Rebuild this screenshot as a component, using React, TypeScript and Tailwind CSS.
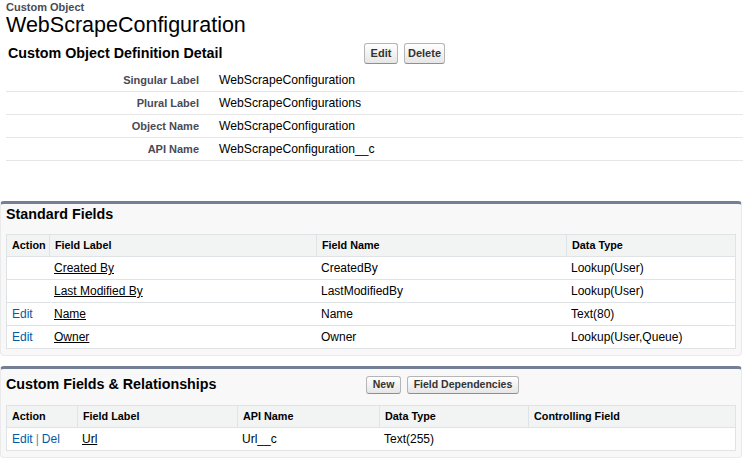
import React from 'react';

interface BtnProps {
  children: React.ReactNode;
  className?: string;
}

function Btn({ children, className = '' }: BtnProps) {
  return (
    <button
      className={`rounded-[3px] border border-[#b5b5b5] border-b-[#8f8f8f] bg-linear-to-b from-white to-[#e6e6e6] font-bold text-[#333] ${className}`}
    >
      {children}
    </button>
  );
}

const details = [
  ['Singular Label', 'WebScrapeConfiguration'],
  ['Plural Label', 'WebScrapeConfigurations'],
  ['Object Name', 'WebScrapeConfiguration'],
  ['API Name', 'WebScrapeConfiguration__c'],
];

const standardFields = [
  { edit: false, label: 'Created By', name: 'CreatedBy', type: 'Lookup(User)' },
  { edit: false, label: 'Last Modified By', name: 'LastModifiedBy', type: 'Lookup(User)' },
  { edit: true, label: 'Name', name: 'Name', type: 'Text(80)' },
  { edit: true, label: 'Owner', name: 'Owner', type: 'Lookup(User,Queue)' },
];

export default function App() {
  return (
    <div className="h-[458px] w-[743px] overflow-hidden bg-white font-['Liberation_Sans',Arial,sans-serif] text-[12px] text-black">
      {/* Page title */}
      <div className="pl-[6px] pt-[1px]">
        <div className="text-[11px] font-bold leading-[12px] text-[#4a4a56]">Custom Object</div>
        <div className="text-[21.5px] leading-[24px]">WebScrapeConfiguration</div>
      </div>

      {/* Detail header */}
      <div className="mt-[5px] flex h-[23px] items-center">
        <h2 className="w-[364px] pl-[8px] text-[14.3px] font-bold">Custom Object Definition Detail</h2>
        <div className="flex gap-[6px]">
          <Btn className="h-[21px] w-[34px] text-[11px]">Edit</Btn>
          <Btn className="h-[21px] w-[41px] text-[11px]">Delete</Btn>
        </div>
      </div>

      {/* Detail rows */}
      <div className="ml-[6px] mt-[4px]">
        {details.map(([label, value]) => (
          <div key={label} className="flex h-[23px] items-center border-b border-[#e6e6e6]">
            <div className="w-[203px] pr-[10px] text-right text-[11px] font-bold text-[#4a4a56]">{label}</div>
            <div className="pl-[10px] text-[12.2px]">{value}</div>
          </div>
        ))}
      </div>

      {/* Standard Fields */}
      <div className="mt-[40px] w-[742px] rounded-[4px] border border-t-[3px] border-[#eaeaea] border-t-[#747e96] bg-[#f8f8f8] px-[5px] pb-[6px]">
        <div className="flex h-[22px] items-center">
          <h3 className="text-[14.3px] font-bold">Standard Fields</h3>
        </div>
        <div className="mt-[8px] border-x border-t border-[#e0e3e5] bg-white">
          <div className="grid h-[22px] grid-cols-[42px_267px_250px_1fr] border-b border-[#e0e3e5] bg-[#f2f3f3] text-[10.8px] font-bold">
            <div className="flex items-center pl-[5px]">Action</div>
            <div className="flex items-center border-l border-[#e0e3e5] pl-[5px]">Field Label</div>
            <div className="flex items-center border-l border-[#e0e3e5] pl-[5px]">Field Name</div>
            <div className="flex items-center border-l border-[#e0e3e5] pl-[5px]">Data Type</div>
          </div>
          {standardFields.map((f) => (
            <div key={f.name} className="grid h-[23px] grid-cols-[42px_267px_250px_1fr] border-b border-[#e0e3e5]">
              <div className="flex items-center pl-[5px] text-[#015ba7]">{f.edit ? 'Edit' : ''}</div>
              <div className="flex items-center pl-[5px]">
                <a href="#" className="underline">{f.label}</a>
              </div>
              <div className="flex items-center pl-[5px]">{f.name}</div>
              <div className="flex items-center pl-[5px]">{f.type}</div>
            </div>
          ))}
        </div>
      </div>

      {/* Custom Fields & Relationships */}
      <div className="mt-[10px] w-[742px] rounded-[4px] border border-t-[3px] border-[#eaeaea] border-t-[#747e96] bg-[#f8f8f8] px-[5px] pb-[6px]">
        <div className="mt-[4px] flex h-[24px] items-center">
          <h3 className="w-[360px] text-[14.3px] font-bold">Custom Fields &amp; Relationships</h3>
          <div className="flex gap-[6px]">
            <Btn className="h-[18px] w-[35px] text-[10.5px]">New</Btn>
            <Btn className="h-[18px] w-[112px] text-[10.5px]">Field Dependencies</Btn>
          </div>
        </div>
        <div className="mt-[8px] border-x border-t border-[#e0e3e5] bg-white">
          <div className="grid h-[22px] grid-cols-[70px_160px_142px_149px_1fr] border-b border-[#e0e3e5] bg-[#f2f3f3] text-[10.8px] font-bold">
            <div className="flex items-center pl-[5px]">Action</div>
            <div className="flex items-center border-l border-[#e0e3e5] pl-[5px]">Field Label</div>
            <div className="flex items-center border-l border-[#e0e3e5] pl-[5px]">API Name</div>
            <div className="flex items-center border-l border-[#e0e3e5] pl-[5px]">Data Type</div>
            <div className="flex items-center border-l border-[#e0e3e5] pl-[5px]">Controlling Field</div>
          </div>
          <div className="grid h-[23px] grid-cols-[70px_160px_142px_149px_1fr] border-b border-[#e0e3e5]">
            <div className="flex items-center pl-[5px]">
              <a href="#" className="text-[#015ba7]">Edit</a>
              <span className="mx-[3px] text-[#6a85a8]">|</span>
              <a href="#" className="text-[#015ba7]">Del</a>
            </div>
            <div className="flex items-center pl-[5px]">
              <a href="#" className="underline">Url</a>
            </div>
            <div className="flex items-center pl-[5px]">Url__c</div>
            <div className="flex items-center pl-[5px]">Text(255)</div>
            <div className="flex items-center pl-[5px]"></div>
          </div>
        </div>
      </div>
    </div>
  );
}
